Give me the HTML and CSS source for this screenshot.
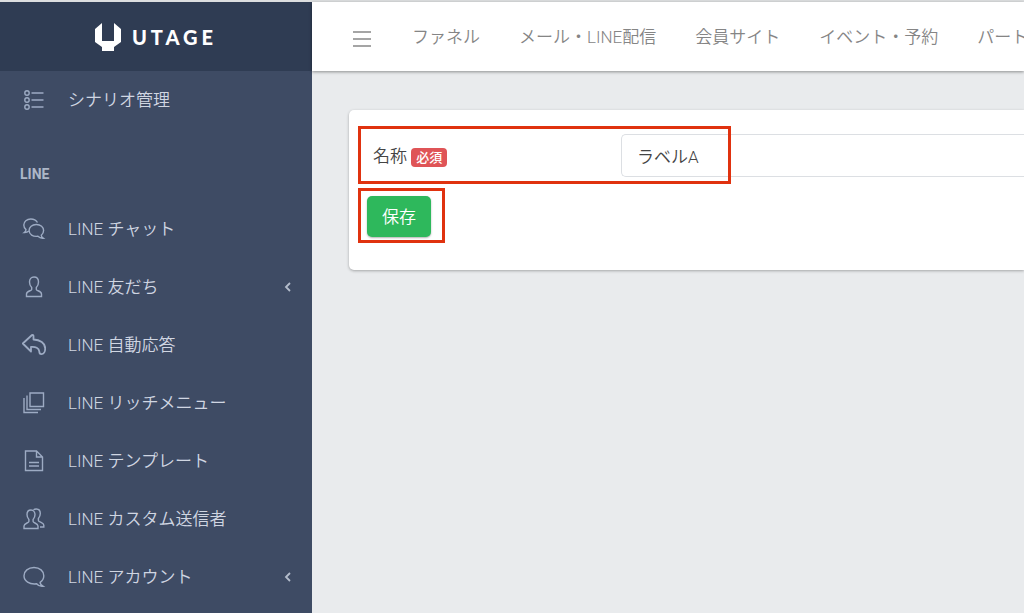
FILE: index.html
```html
<!DOCTYPE html>
<html lang="ja">
	<head>
		<meta charset="UTF-8" />
		<meta name="viewport" content="width=device-width, initial-scale=1.0" />
		<title>UTAGE</title>
		<link rel="stylesheet" href="styles.css">
	</head>
	<body>
		<div id="app">
			<aside class="sidebar">
				<a class="brand" href="#">
					<svg width="26" height="28" viewBox="0 0 26 28" fill="#fff">
						<path d="M7 0v18h12V0l7 6v13l-7 5v4H7v-4l-7-5V6z" />
					</svg>
					<span>UTAGE</span>
				</a>
				<nav class="menu">
					<a class="item" href="#">
						<svg class="icon" viewBox="0 0 24 24">
							<circle cx="5" cy="5" r="2.200" /><circle cx="5" cy="12" r="2.200" /><circle cx="5" cy="19" r="2.200" />
							<path d="M9.500 5h12M9.500 12h12M9.500 19h12" />
						</svg>
						<span>シナリオ管理</span>
					</a>
					<h2>LINE</h2>
					<a class="item" href="#">
						<svg class="icon" viewBox="0 0 24 24">
							<path d="M15.500 5.500C14 3 11.500 2 8.800 2 4.800 2 1.800 4.500 1.800 8c0 2 .9 3.500 2.200 4.600 0 1.200-.6 2.300-1.700 3 1.800.1 3.200-.3 4.500-1.500" />
							<path d="M14.300 7.500c4.400 0 7.300 2.600 7.300 6 0 2-.9 3.600-2.300 4.700 0 1.200.7 2.300 1.900 3-2.100.2-3.900-.5-5.300-1.900-5 .7-8.800-2-8.800-5.800 0-3.400 3-6 7.200-6z" />
						</svg>
						<span>LINE チャット</span>
					</a>
					<a class="item" href="#">
						<svg class="icon" viewBox="0 0 24 24">
							<path d="M12 2c-2.900 0-4.500 2.100-4.500 5 0 2.300.8 4.200 2.200 5.500v2c0 1.200-5.200 1.600-5.200 4.500v2.500h15V19c0-2.900-5.200-3.300-5.200-4.500v-2c1.400-1.300 2.200-3.200 2.200-5.500 0-2.900-1.600-5-4.500-5z" />
						</svg>
						<span>LINE 友だち</span>
						<svg class="arrow" viewBox="0 0 8 10"><path d="M6 1 2 5l4 4" /></svg>
					</a>
					<a class="item" href="#">
						<svg class="icon bold" viewBox="0 0 24 24">
							<path d="M10 2 .8 10.500 9 18.500V14c4.500-.4 8 .8 8.300 4.500 0 1.700.5 2.700 2.100 2.700 2.300 0 3.800-2.700 3.800-5.700 0-5.500-5.200-8.800-11.700-9V3c0-1-.8-1.500-1.500-1z" />
						</svg>
						<span>LINE 自動応答</span>
					</a>
					<a class="item" href="#">
						<svg class="icon" viewBox="0 0 24 24">
							<path d="M8 2h13.500v13.500H8zM5 4.500v14h14M2 7v14.500h14" />
						</svg>
						<span>LINE リッチメニュー</span>
					</a>
					<a class="item" href="#">
						<svg class="icon" viewBox="0 0 24 24">
							<path d="M3.500 2h11l6 6v13.500h-17zM14.500 2v6h6M7 13.500h10M7 17h10" />
						</svg>
						<span>LINE テンプレート</span>
					</a>
					<a class="item" href="#">
						<svg class="icon" viewBox="0 0 24 24">
							<path d="M9 3c-2.500 0-4 2-4 4.600 0 2 .7 3.700 1.900 4.900v2C6.900 16 2 16.200 2 19v2.500h14V19c0-2.800-4.900-3-4.900-4.500v-2C12.300 11.300 13 9.600 13 7.600 13 5 11.500 3 9 3z" />
							<path d="M11.500 2.800C12.300 2.200 13.300 2 14.200 2 17 2 18.300 4 18.300 6.600c0 2-.7 3.600-1.900 4.800v2c0 1.600 5.400 2.100 5.400 4.700V20H18" />
						</svg>
						<span>LINE カスタム送信者</span>
					</a>
					<a class="item" href="#">
						<svg class="icon" viewBox="0 0 24 24">
							<path d="M12 2.500c5.800 0 9.800 3.600 9.800 8.200 0 2.800-1.400 5.100-3.700 6.600 0 1.500 1.100 3 2.900 3.900-2.600.3-4.900-.5-6.400-2.400C7.400 19.700 2 16 2 10.700c0-4.600 4.200-8.200 10-8.200z" />
						</svg>
						<span>LINE アカウント</span>
						<svg class="arrow" viewBox="0 0 8 10"><path d="M6 1 2 5l4 4" /></svg>
					</a>
				</nav>
			</aside>

			<div class="content">
				<header class="topbar">
					<button class="toggle" type="button" aria-label="メニュー">
						<svg width="18" height="16" viewBox="0 0 18 16"><path d="M0 1h18M0 8h18M0 15h18" /></svg>
					</button>
					<a href="#">ファネル</a>
					<a href="#">メール・LINE配信</a>
					<a href="#">会員サイト</a>
					<a href="#">イベント・予約</a>
					<a href="#">パートナー</a>
				</header>
				<main>
					<form class="card">
						<div class="row">
							<label for="name">名称 <span class="badge">必須</span></label>
							<input id="name" type="text" value="ラベルA" />
							<div class="mark mark-name"></div>
						</div>
						<div class="actions">
							<button class="save" type="button">保存</button>
							<div class="mark mark-save"></div>
						</div>
					</form>
				</main>
			</div>
		</div>
	</body>
</html>
```
FILE: styles.css
```css
* {
	box-sizing: border-box;
}
body {
	margin: 0;
	background: #e9ebed;
	color: #444;
	font-family: Roboto, "Noto Sans CJK JP", sans-serif;
	font-size: 17px;
	font-weight: 350;
	line-height: 26px;
	overflow: hidden;
}
a {
	color: inherit;
	text-decoration: none;
}
#app {
	display: flex;
	min-height: 100vh;
	border-top: 2px solid #dcdedf;
}

/* sidebar */
.sidebar {
	flex: none;
	width: 312px;
	background: #3e4b64;
	color: #d0d6e2;
}
.brand {
	display: flex;
	align-items: center;
	justify-content: center;
	gap: 11px;
	height: 69px;
	background: #2f3c53;
	color: #fff;
	font-family: Lato, sans-serif;
	font-size: 20px;
	font-weight: 900;
	letter-spacing: 4px;
}
.brand svg {
	flex: none;
}
.item {
	display: flex;
	align-items: center;
	gap: 22px;
	padding: 16px 20px 16px 22px;
}
.icon {
	flex: none;
	width: 24px;
	height: 24px;
	fill: none;
	stroke: #9dabc3;
	stroke-width: 1.4;
}
.bold {
	stroke-width: 1.8;
	stroke-linejoin: round;
}
.arrow {
	width: 8px;
	height: 10px;
	margin-left: auto;
	fill: none;
	stroke: #b4bdcc;
	stroke-width: 1.8;
}
.menu h2 {
	margin: 0;
	padding: 32px 20px 13px;
	color: #adb7c8;
	font-size: 14px;
	font-weight: 700;
	line-height: 26px;
}

/* top navigation */
.content {
	flex: 1;
	min-width: 0;
}
.topbar {
	display: flex;
	align-items: center;
	gap: 39px;
	height: 69px;
	padding-left: 41px;
	background: #fff;
	box-shadow: 0 1px 3px rgba(0, 0, 0, 0.4);
	color: #858585;
	white-space: nowrap;
	overflow: hidden;
}
.toggle {
	display: flex;
	margin: 4px 2px 0 0;
	padding: 0;
	border: none;
	background: none;
}
.toggle svg {
	stroke: #888;
	stroke-width: 1.5;
}

/* form */
main {
	padding: 39px 0 0 37px;
}
.card {
	padding: 24px 0 33px 24px;
	background: #fff;
	border-radius: 5px 0 0 5px;
	box-shadow: 0 1px 3px rgba(0, 0, 0, 0.3);
}
.row {
	position: relative;
	display: flex;
	align-items: center;
}
.row label {
	flex: none;
	width: 248px;
}
.badge {
	display: inline-block;
	padding: 0 5px;
	border-radius: 4px;
	background: #df5457;
	color: #fff;
	font-size: 13px;
	font-weight: 500;
	line-height: 19px;
}
.row input {
	flex: 1;
	min-width: 0;
	height: 43px;
	padding: 0 15px;
	border: 1px solid #dcdfe3;
	border-right: none;
	border-radius: 5px 0 0 5px;
	color: #444;
	font: inherit;
}
.actions {
	position: relative;
	display: flex;
	margin: 19px 0 0 -6px;
}
.save {
	width: 64px;
	height: 41px;
	padding: 0;
	border: none;
	border-radius: 5px;
	background: #2eb85c;
	box-shadow: 0 1px 2px rgba(0, 0, 0, 0.3);
	color: #fff;
	font: inherit;
}
.mark {
	position: absolute;
	border: 3px solid #e0320f;
	pointer-events: none;
}
.mark-name {
	top: -8px;
	left: -15px;
	width: 373px;
	height: 58px;
}
.mark-save {
	top: -8px;
	left: -9px;
	width: 87px;
	height: 55px;
}
```
